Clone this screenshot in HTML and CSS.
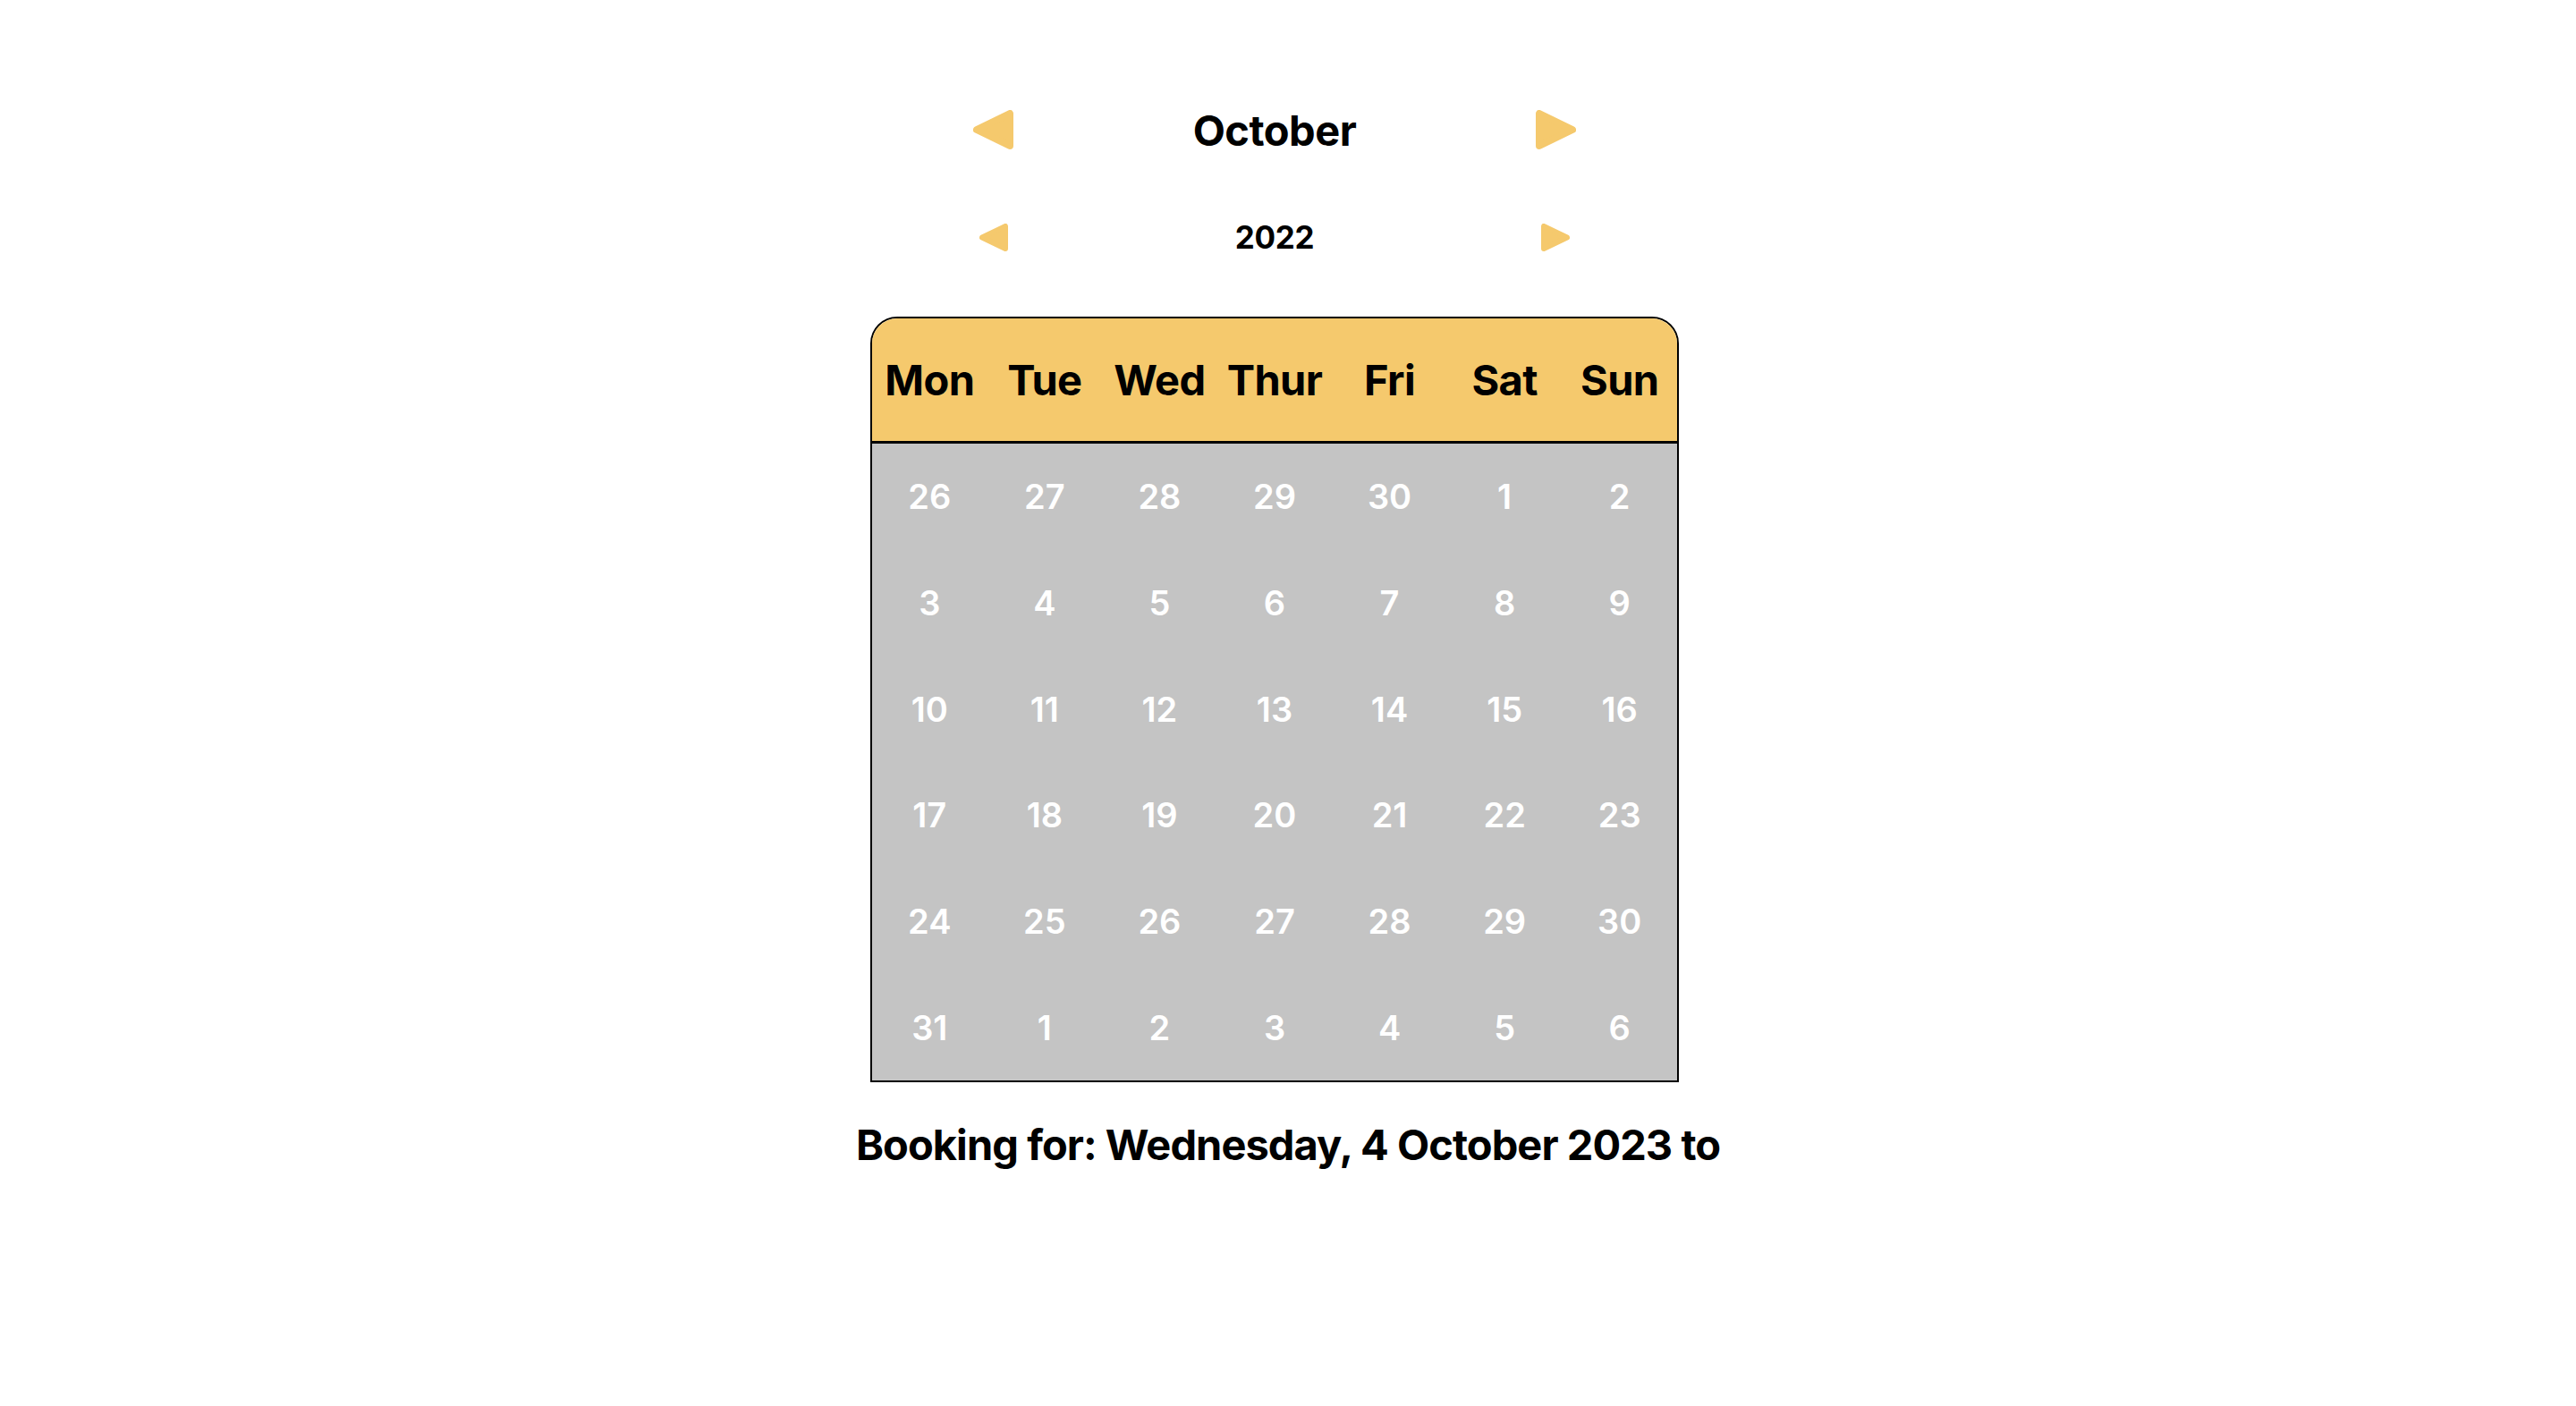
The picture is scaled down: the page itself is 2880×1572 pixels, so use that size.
FILE: index.html
```html
<!DOCTYPE html>
<html lang="en">
<head>
<meta charset="utf-8">
<title>Booking calendar</title>
<link rel="stylesheet" href="styles.css">
</head>
<body>
<main class="page">
  <section class="picker">
    <div class="nav nav-month">
      <button class="arrow arrow-big" aria-label="Previous month">
        <svg width="45" height="44" viewBox="0 0 45 44"><polygon points="4,22 41,4 41,40" /></svg>
      </button>
      <h1 class="month">October</h1>
      <button class="arrow arrow-big" aria-label="Next month">
        <svg width="45" height="44" viewBox="0 0 45 44"><polygon points="41,22 4,4 4,40" /></svg>
      </button>
    </div>
    <div class="nav nav-year">
      <button class="arrow arrow-small" aria-label="Previous year">
        <svg width="32" height="31" viewBox="0 0 32 31"><polygon points="3,15.5 29,3 29,28" /></svg>
      </button>
      <h2 class="year">2022</h2>
      <button class="arrow arrow-small" aria-label="Next year">
        <svg width="32" height="31" viewBox="0 0 32 31"><polygon points="29,15.5 3,3 3,28" /></svg>
      </button>
    </div>
    <div class="calendar">
      <div class="weekdays">
        <span>Mon</span><span>Tue</span><span>Wed</span><span>Thur</span><span>Fri</span><span>Sat</span><span>Sun</span>
      </div>
      <div class="days">
        <span>26</span><span>27</span><span>28</span><span>29</span><span>30</span><span>1</span><span>2</span>
        <span>3</span><span>4</span><span>5</span><span>6</span><span>7</span><span>8</span><span>9</span>
        <span>10</span><span>11</span><span>12</span><span>13</span><span>14</span><span>15</span><span>16</span>
        <span>17</span><span>18</span><span>19</span><span>20</span><span>21</span><span>22</span><span>23</span>
        <span>24</span><span>25</span><span>26</span><span>27</span><span>28</span><span>29</span><span>30</span>
        <span>31</span><span>1</span><span>2</span><span>3</span><span>4</span><span>5</span><span>6</span>
      </div>
    </div>
  </section>
  <p class="booking">Booking for: Wednesday, 4 October 2023 to</p>
</main>
</body>
</html>
```
FILE: styles.css
```css
* { box-sizing: border-box; }

html, body {
  margin: 0;
  padding: 0;
  background: #ffffff;
}

body {
  font-family: Inter, "Noto Sans", "Liberation Sans", sans-serif;
  color: #000000;
}

.page {
  display: flex;
  flex-direction: column;
  align-items: center;
  padding-top: 123px;
}

.picker {
  display: flex;
  flex-direction: column;
  align-items: center;
  margin-right: 30px;
}

.nav {
  width: 674px;
  display: flex;
  align-items: center;
  justify-content: space-between;
}

.nav-month { height: 44px; }

.nav-year {
  height: 31px;
  margin-top: 83px;
}

.arrow {
  width: 45px;
  padding: 0;
  border: 0;
  background: none;
  display: flex;
  justify-content: center;
  align-items: center;
  cursor: pointer;
}

.arrow svg polygon {
  fill: #f5c96d;
  stroke: #f5c96d;
  stroke-linejoin: round;
}

.arrow-big svg polygon { stroke-width: 8; }
.arrow-small svg polygon { stroke-width: 6; }

.month {
  margin: 0;
  font-size: 47px;
  font-weight: 700;
  line-height: 1;
  letter-spacing: -0.5px;
}

.year {
  margin: 0;
  font-size: 35px;
  font-weight: 700;
  line-height: 1;
  letter-spacing: -0.3px;
}

.calendar {
  margin-top: 73px;
  width: 904px;
  border: 2px solid #000000;
  border-radius: 30px 30px 0 0;
  overflow: hidden;
}

.weekdays {
  height: 140px;
  display: grid;
  grid-template-columns: repeat(7, 1fr);
  align-items: center;
  background: #f5c96d;
  border-bottom: 3px solid #000000;
  font-size: 47px;
  font-weight: 700;
  text-align: center;
  line-height: 1;
  letter-spacing: -0.6px;
}

.days {
  height: 712px;
  display: grid;
  grid-template-columns: repeat(7, 1fr);
  grid-template-rows: repeat(6, 1fr);
  align-items: center;
  background: #c4c4c4;
  color: #ffffff;
  font-size: 38px;
  font-weight: 600;
  text-align: center;
  line-height: 1;
}

.booking {
  margin: 42px 0 0;
  font-size: 47px;
  font-weight: 700;
  line-height: 1.2;
  letter-spacing: -0.95px;
}
```
